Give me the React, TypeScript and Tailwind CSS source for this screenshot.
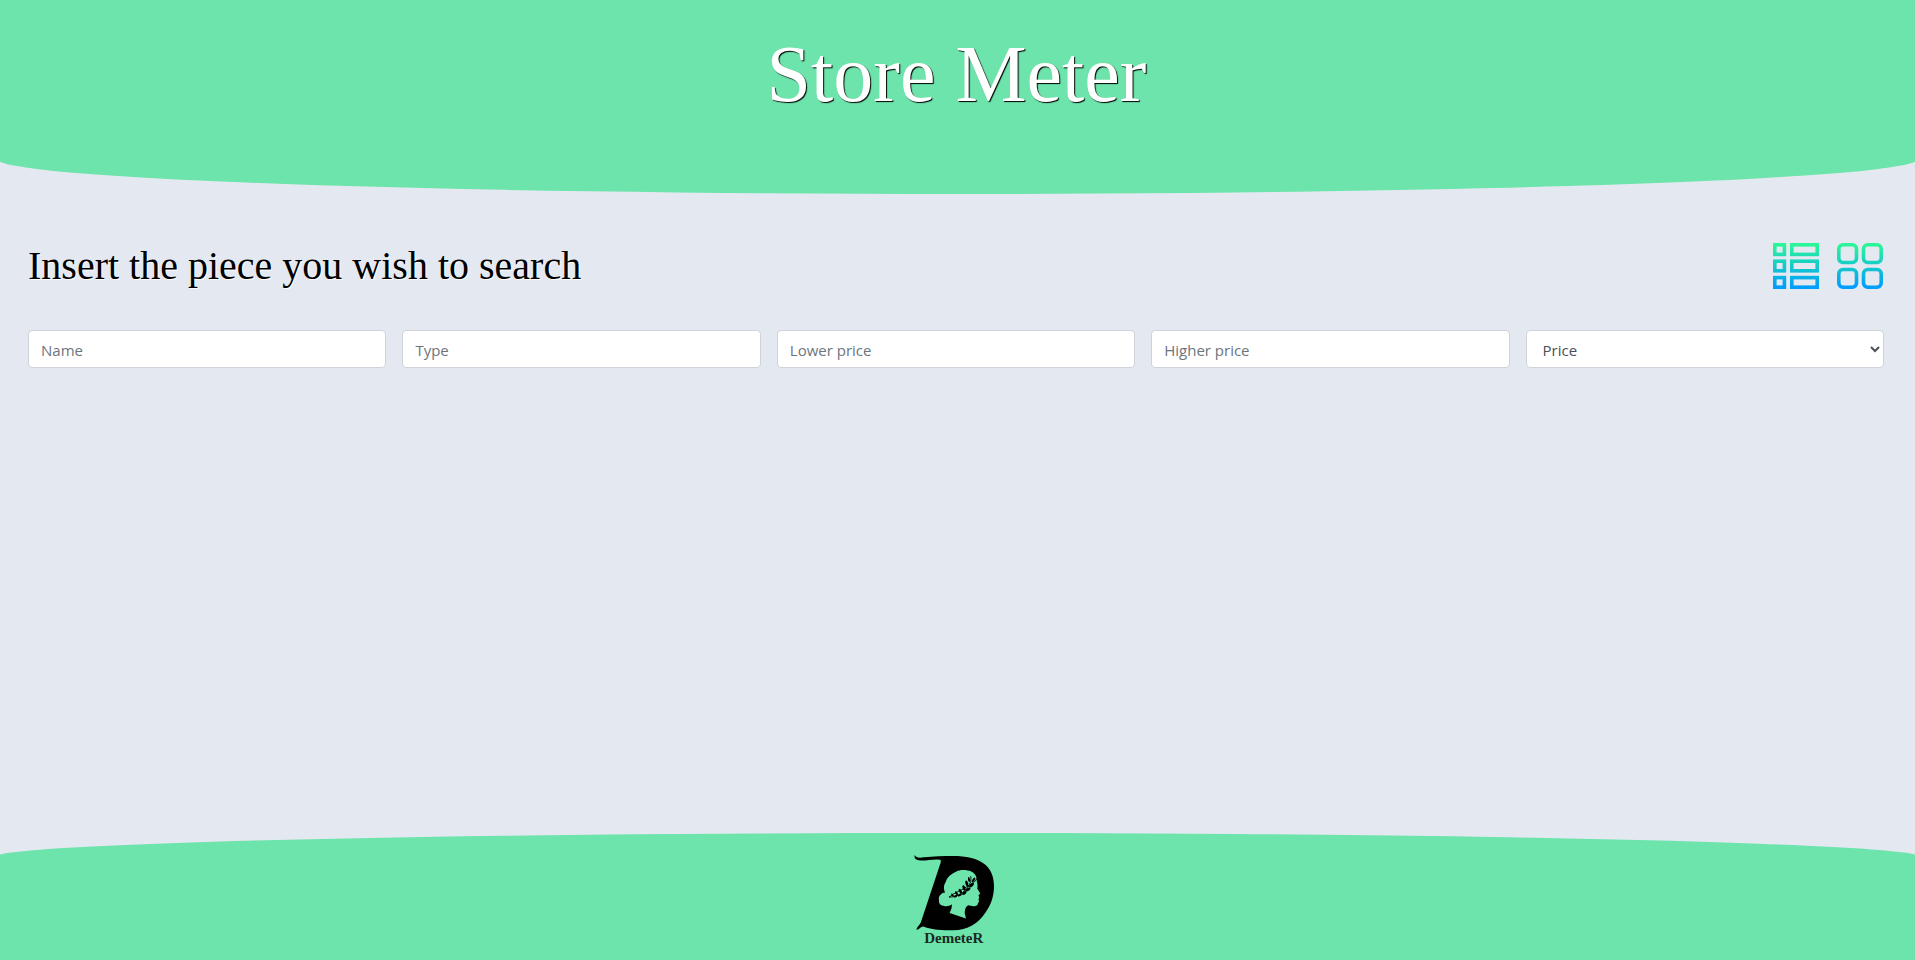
const fields = [
  { id: "name", label: "Name" },
  { id: "type", label: "Type" },
  { id: "lower-price", label: "Lower price" },
  { id: "higher-price", label: "Higher price" },
];

const control =
  "h-[38px] w-full min-w-0 rounded border border-[#ced4da] bg-white text-[15px] text-[#495057] placeholder:text-[#6c757d] placeholder:opacity-100";

function ListIcon() {
  return (
    <svg viewBox="0 0 46 46" className="size-[46px]" fill="none" stroke="url(#list-fill)" strokeWidth="3.6" aria-hidden="true">
      <defs>
        <linearGradient id="list-fill" gradientUnits="userSpaceOnUse" x1="0" y1="0" x2="0" y2="46">
          <stop offset="0.05" stopColor="#2af598" />
          <stop offset="0.95" stopColor="#009efd" />
        </linearGradient>
      </defs>
      {[0, 16.4, 32.8].map((y) => (
        <g key={y}>
          <rect x="1.8" y={y + 1.8} width="9.6" height="9.6" />
          <rect x="18.8" y={y + 1.8} width="25.4" height="9.6" />
        </g>
      ))}
    </svg>
  );
}

function GridIcon() {
  return (
    <svg viewBox="0 0 46 46" className="size-[46px]" fill="none" stroke="url(#grid-fill)" strokeWidth="3.6" aria-hidden="true">
      <defs>
        <linearGradient id="grid-fill" gradientUnits="userSpaceOnUse" x1="0" y1="0" x2="0" y2="46">
          <stop offset="0.05" stopColor="#2af598" />
          <stop offset="0.95" stopColor="#009efd" />
        </linearGradient>
      </defs>
      {[1.8, 26.5].map((y) =>
        [1.8, 26.5].map((x) => <rect key={`${x}-${y}`} x={x} y={y} width="17.7" height="17.7" rx="4.2" />),
      )}
    </svg>
  );
}

function Logo() {
  return (
    <svg viewBox="0 0 100 100" className="size-[100px]" role="img" aria-label="DemeteR">
      <path
        fill="#000"
        d="M8.7 7C10 9.8 13 10 18 9.3C27 8.2 38 8 47.3 8C73 8 88 17 88 38C88 48 85 57 79.5 64.5C72 75.5 62 82.3 47 82.3C36 82.3 26.500 82 17.3 78.5C14.5 78.7 13.5 81.5 10.3 81.7C11 78.5 13.5 77.5 14.7 74.7L34.7 14.5C35.4 12 34.5 11.4 32 11.4C26 11.2 20 12.6 14.7 12.4C10 12.2 7.8 10.5 8.7 7Z"
      />
      <path
        fill="#6ce4ab"
        d="M38.3 42.5C37.5 39 38 36.5 40 33.5C41 29.5 45 26 50.5 23.6C53.5 21.8 60 21.4 65.7 23.7C69.5 25.5 71 29 70.9 33.7C71.8 36 71.6 38.5 71.3 40.8L72.7 43L74.2 45.5L72.5 47.2L73.3 49.7L72.5 51L73 53.7L72 55C72 57.5 69.5 58.5 67.3 58.2L62.3 57.3C59.5 58.5 58.8 61.5 58.7 65.3L60 70.5L43.6 65C45 62 46.2 59.5 45.8 56.3C43 58.5 40 58.7 37.3 57.7C34.5 57.5 32.5 55 33 52.5C32.2 50 33.5 47.5 34.6 46.8C35.5 45.2 37.5 44.6 39 44.8Z"
      />
      <path
        d="M43.3 49C49 49.5 56 46 60.5 41C64 37 65.5 33 64.8 28.5M43.3 49C48 44.5 57 42 62 38C66 35.8 69.5 34 71 30.5"
        fill="none"
        stroke="#000"
        strokeWidth="0.9"
        strokeLinecap="round"
      />
      <g fill="#000">
        <ellipse cx="46.5" cy="47" rx="1.8" ry="0.9" transform="rotate(50 46.5 47)" />
        <ellipse cx="49.5" cy="48.3" rx="2" ry="1" transform="rotate(-20 49.5 48.3)" />
        <ellipse cx="50.5" cy="45.3" rx="2.2" ry="1.1" transform="rotate(55 50.5 45.3)" />
        <ellipse cx="53.8" cy="47" rx="2.2" ry="1.2" transform="rotate(-25 53.8 47)" />
        <ellipse cx="54.3" cy="43.2" rx="2.6" ry="1.3" transform="rotate(60 54.3 43.2)" />
        <ellipse cx="58.3" cy="45" rx="2.5" ry="1.4" transform="rotate(-35 58.3 45)" />
        <ellipse cx="58" cy="40" rx="2.8" ry="1.4" transform="rotate(70 58 40)" />
        <ellipse cx="62" cy="41.5" rx="2.8" ry="1.5" transform="rotate(-30 62 41.5)" />
        <ellipse cx="60.8" cy="35.5" rx="3" ry="1.4" transform="rotate(75 60.8 35.5)" />
        <ellipse cx="65.5" cy="37.2" rx="3" ry="1.5" transform="rotate(-40 65.5 37.2)" />
        <ellipse cx="63" cy="31.5" rx="2.6" ry="1" transform="rotate(80 63 31.5)" />
        <ellipse cx="67.5" cy="32" rx="2.8" ry="1.1" transform="rotate(-55 67.5 32)" />
      </g>
      <text x="47.8" y="94.6" textAnchor="middle" fill="#1a2a22" className="font-['Liberation_Serif',serif] text-[15px] font-bold">
        DemeteR
      </text>
    </svg>
  );
}

export default function App() {
  return (
    <div className="flex min-h-screen flex-col overflow-hidden bg-[#e4e8f1] font-['Open_Sans',sans-serif]">
      <header className="-mx-[3px] flex h-[194px] justify-center rounded-b-[50%_35px] bg-[#6ce4ab] pr-[2px] pt-[26px]">
        <h1 className="font-['Liberation_Serif',serif] text-[80px] leading-[96px] text-white [text-shadow:1px_1px_1px_black]">
          Store Meter
        </h1>
      </header>

      <main className="flex-1 pl-7 pr-[31px] pt-[42px]">
        <div className="flex items-center justify-between pr-px">
          <h2 className="font-['Liberation_Serif',serif] text-[40px] leading-[60px] text-black [text-shadow:1px_1px_1px_white]">
            Insert the piece you wish to search
          </h2>
          <div className="flex gap-[18px]">
            <button type="button" aria-label="List view">
              <ListIcon />
            </button>
            <button type="button" aria-label="Grid view">
              <GridIcon />
            </button>
          </div>
        </div>

        <form className="mt-[34px] grid grid-cols-5 gap-4">
          {fields.map((field) => (
            <input
              key={field.id}
              id={field.id}
              name={field.id}
              type="text"
              aria-label={field.label}
              placeholder={field.label}
              className={`${control} px-3 pt-0.5`}
            />
          ))}
          <select id="sort" name="sort" aria-label="Sort by" defaultValue="price" className={`${control} px-3 pt-0.5`}>
            <option value="price">Price</option>
            <option value="name">Name</option>
            <option value="type">Type</option>
          </select>
        </form>
      </main>

      <footer className="-mx-[5px] flex h-[127px] justify-center rounded-t-[50%_24px] bg-[#6ce4ab] pr-[3px] pt-[15px]">
        <Logo />
      </footer>
    </div>
  );
}
